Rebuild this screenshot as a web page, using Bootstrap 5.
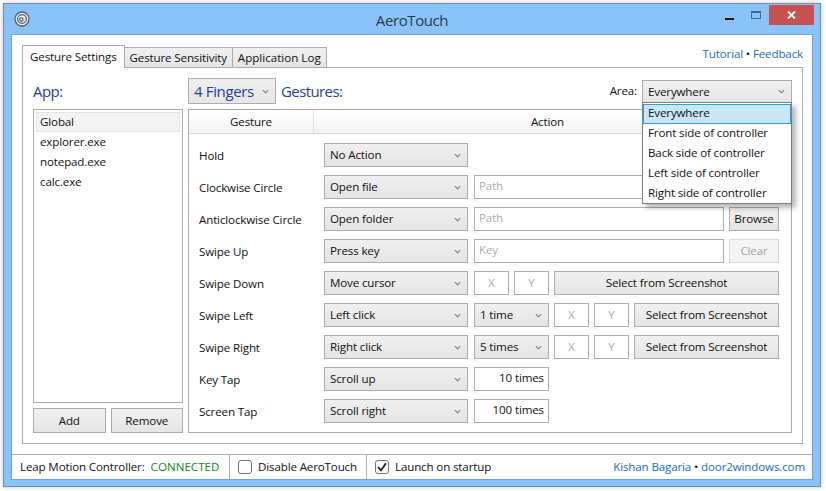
<!DOCTYPE html>
<html lang="en">

<head>
  <meta charset="UTF-8" />
  <title>AeroTouch</title>
  <meta name="viewport" content="width=device-width, initial-scale=1.0">

  <link href="https://cdn.jsdelivr.net/npm/bootstrap@5.3.3/dist/css/bootstrap.min.css" rel="stylesheet">

  <style>
    html, body {
      height: 100%;
      overflow: hidden;
    }

    body {
      background-color: #fff;
      font-family: "Open Sans", "Liberation Sans", sans-serif;
      font-size: 11.6px;
      letter-spacing: -.15px;
      line-height: 16px;
      color: #111;
    }

    .aero-window {
      width: 818px;
      height: 484px;
      margin: 3px 0 0 3px;
      border: 1px solid #6d8fae;
      background-color: #8ac3f9;
      box-shadow: 0 0 5px rgba(0, 0, 0, .22);
      padding: 0 7px 7px;
    }

    .title-bar {
      height: 30px;
      position: relative;
    }

    .title-text {
      font-size: 15px;
      letter-spacing: -.4px;
      color: #2b3a48;
      line-height: 32px;
    }

    .app-icon {
      position: absolute;
      left: 3px;
      top: 7px;
    }

    .win-btns {
      position: absolute;
      right: -1px;
      top: 1px;
    }

    .win-btn {
      height: 20px;
    }

    .win-min { width: 28px; }
    .win-max { width: 26px; }
    .win-close { width: 45px; background-color: #c75050; }

    .client-pane {
      height: 446px;
      border: 1px solid #6ea3d4;
      background-color: #fff;
    }

    .tab-area {
      padding: 10px 9px 10px 10px;
    }

    .nav-tabs.aero-tabs {
      height: 22px;
      border-bottom: 0;
      align-items: flex-end;
      flex-wrap: nowrap;
    }

    .aero-tabs .nav-link {
      height: 20px;
      padding: 2px 5px 0;
      margin: 0 0 0 -1px;
      border: 1px solid #acacac;
      border-bottom: 0;
      border-radius: 0;
      background: linear-gradient(#f0f0f0, #e5e5e5);
      color: #111;
      white-space: nowrap;
    }

    .aero-tabs .nav-item:first-child .nav-link {
      margin-left: 0;
    }

    .aero-tabs .nav-link.active {
      height: 23px;
      padding: 3px 7px 0;
      background: #fff;
      color: #111;
      border-color: #acacac;
      position: relative;
      z-index: 2;
      margin-bottom: -1px;
    }

    .aero-tabs .nav-link.log-tab {
      letter-spacing: 0;
    }

    .top-links {
      align-self: flex-start;
      line-height: 18px;
    }

    .blue-link {
      color: #2468c8;
      text-decoration: none;
    }

    .tab-panel {
      height: 377px;
      border: 1px solid #acacac;
      padding: 10px 10px 10px 10px;
    }

    .app-col {
      width: 150px;
      margin-right: 5px;
    }

    .head-text {
      font-size: 15px;
      letter-spacing: -.6px;
      color: #1f3ea0;
      line-height: 26px;
    }

    .app-list {
      height: 294px;
      margin-top: 5px;
      border: 1px solid #acacac;
      border-radius: 0;
      padding: 2px;
      --bs-list-group-border-width: 0;
    }

    .app-list .list-group-item {
      padding: 2px 4px;
      height: 20px;
      background: transparent;
      color: #111;
      font-size: 11.6px;
      line-height: 16px;
    }

    .app-list .list-group-item.picked {
      background-color: #f3f3f3;
      box-shadow: inset 0 0 0 1px #e3e3e3;
    }

    .flat-btn {
      height: 24px;
      padding: 0 4px;
      border: 1px solid #acacac;
      border-radius: 0;
      background: linear-gradient(#f0f0f0, #e5e5e5);
      color: #111;
      font-size: 11.6px;
      letter-spacing: -.15px;
      line-height: 20px;
      white-space: nowrap;
    }

    .flat-btn:disabled {
      background: #f4f4f4;
      border-color: #d9d9d9;
      color: #a2a2a2;
      opacity: 1;
    }

    .foot-btns {
      margin-top: 5px;
      gap: 5px;
    }

    .foot-btns .flat-btn {
      height: 25px;
      flex: 1 1 0;
    }

    .flat-select {
      height: 24px;
      padding: 0 18px 0 5px;
      border: 1px solid #acacac;
      border-radius: 0;
      color: #111;
      font-size: 11.6px;
      letter-spacing: -.15px;
      line-height: 20px;
      background-color: #ebebeb;
      background-image: url("data:image/svg+xml,%3csvg xmlns='http://www.w3.org/2000/svg' viewBox='0 0 8 5'%3e%3cpath fill='none' stroke='%23777' stroke-width='1.2' d='M1 1l3 3 3-3'/%3e%3c/svg%3e"), linear-gradient(#f0f0f0, #e5e5e5);
      background-repeat: no-repeat;
      background-position: right 6px center, 0 0;
      background-size: 7px 5px, 100% 100%;
    }

    .fingers-select {
      width: 88px;
      height: 26px;
      padding-left: 5px;
      font-size: 15px;
      letter-spacing: -.35px;
      color: #1f3ea0;
      margin-right: 5px;
    }

    .area-label {
      margin-right: 5px;
      padding-top: 5px;
    }

    .area-box {
      position: relative;
      width: 150px;
      margin-top: 2px;
    }

    .area-box .flat-select {
      height: 23px;
    }

    .area-menu {
      display: block;
      position: absolute;
      top: 22px;
      left: 0;
      width: 150px;
      min-width: 0;
      height: 102px;
      padding: 1px 0;
      margin: 0;
      border: 1px solid #7f7f7f;
      border-radius: 0;
      box-shadow: 4px 4px 5px rgba(0, 0, 0, .28);
      background-color: #fff;
      z-index: 5;
    }

    .area-menu .dropdown-item {
      height: 20px;
      padding: 1px 5px;
      color: #111;
      font-size: 11.6px;
      line-height: 16px;
    }

    .area-menu .dropdown-item.active {
      background-color: #c9e5f6;
      box-shadow: inset 0 0 0 1px #26a0da;
      color: #111;
    }

    .gesture-box {
      height: 324px;
      margin-top: 5px;
      border: 1px solid #acacac;
    }

    .grid-head {
      height: 24px;
      background: linear-gradient(#fff, #f3f3f3);
      border-bottom: 1px solid #d5d5d5;
      line-height: 23px;
      padding-right: 10px;
    }

    .head-gesture {
      width: 125px;
      border-right: 1px solid #e3e3e3;
    }

    .grid-rows {
      padding: 9px 12px 0 10px;
    }

    .rule-row {
      height: 24px;
      margin-bottom: 8px;
      gap: 5px;
    }

    .rule-name {
      width: 120px;
      flex: none;
      padding-top: 2px;
    }

    .rule-action {
      width: 144px;
      flex: none;
      margin-right: 1px;
    }

    .rule-times {
      width: 75px;
      flex: none;
    }

    .flat-input {
      height: 24px;
      padding: 0 4px 3px;
      border: 1px solid #acacac;
      border-radius: 0;
      font-size: 11.6px;
      letter-spacing: -.15px;
      line-height: 20px;
      color: #111;
    }

    .flat-input::placeholder {
      color: #ababab;
      opacity: 1;
    }

    .coord-input {
      width: 35px;
      flex: none;
      padding-bottom: 2px;
      text-align: center;
    }

    .count-input {
      width: 75px;
      flex: none;
      text-align: right;
    }

    .side-btn {
      width: 50px;
      flex: none;
    }

    .status-row {
      height: 25px;
      border-top: 1px solid #acacac;
      line-height: 24px;
    }

    .status-cell {
      height: 24px;
      padding: 0 8px 0 8px;
      border-right: 1px solid #acacac;
      white-space: nowrap;
    }

    .status-first {
      width: 218px;
    }

    .status-green {
      color: #0c8a14;
      letter-spacing: 0;
      margin-left: 6px;
    }

    .status-second {
      width: 137px;
    }

    .status-credit {
      padding-right: 7px;
    }

    .aero-check {
      width: 14px;
      height: 14px;
      margin: 0 6px 0 0;
      border: 1px solid #707070;
      border-radius: 0;
      flex: none;
    }

    .aero-check:checked {
      background-color: #fff;
      border-color: #707070;
      background-size: 12px 12px;
      background-image: url("data:image/svg+xml,%3csvg xmlns='http://www.w3.org/2000/svg' viewBox='0 0 12 12'%3e%3cpath fill='none' stroke='%23222' stroke-width='1.8' d='M2 6l3 3.4L10 2.2'/%3e%3c/svg%3e");
    }
  </style>
</head>

<body>
  <div class="aero-window">
    <div class="title-bar text-center">
      <svg class="app-icon" width="16" height="16" viewBox="0 0 16 16">
        <circle cx="8" cy="8" r="7" fill="#e6edf4" stroke="#55606a" stroke-width="1.3" />
        <circle cx="8" cy="8" r="4.4" fill="none" stroke="#55606a" stroke-width="1.3" />
        <circle cx="7.4" cy="8.6" r="1.7" fill="#fff" stroke="#55606a" stroke-width="1.2" />
      </svg>
      <span class="title-text">AeroTouch</span>
      <div class="win-btns d-flex">
        <div class="win-btn win-min d-flex align-items-center justify-content-center">
          <svg width="9" height="12" viewBox="0 0 9 12"><rect y="9" width="9" height="2" fill="#111" /></svg>
        </div>
        <div class="win-btn win-max d-flex align-items-center justify-content-center">
          <svg width="10" height="8" viewBox="0 0 10 8"><rect x=".5" y=".5" width="9" height="7" fill="none" stroke="#4a6a88" /><rect x="1" y="1" width="8" height="1" fill="#4a6a88" /></svg>
        </div>
        <div class="win-btn win-close d-flex align-items-center justify-content-center">
          <svg width="9" height="8" viewBox="0 0 9 8"><path d="M1 .5l7 7M8 .5l-7 7" stroke="#fff" stroke-width="1.8" fill="none" /></svg>
        </div>
      </div>
    </div>

    <div class="client-pane">
      <div class="tab-area">
        <ul class="nav nav-tabs aero-tabs">
          <li class="nav-item"><a class="nav-link active" href="#">Gesture Settings</a></li>
          <li class="nav-item"><a class="nav-link" href="#">Gesture Sensitivity</a></li>
          <li class="nav-item"><a class="nav-link log-tab" href="#">Application Log</a></li>
          <li class="top-links ms-auto"><a class="blue-link" href="#">Tutorial</a> • <a class="blue-link" href="#">Feedback</a></li>
        </ul>

        <div class="tab-panel d-flex">
          <div class="app-col">
            <div class="head-text">App:</div>
            <div class="list-group app-list">
              <div class="list-group-item picked">Global</div>
              <div class="list-group-item">explorer.exe</div>
              <div class="list-group-item">notepad.exe</div>
              <div class="list-group-item">calc.exe</div>
            </div>
            <div class="foot-btns d-flex">
              <button class="btn flat-btn">Add</button>
              <button class="btn flat-btn">Remove</button>
            </div>
          </div>

          <div class="flex-grow-1">
            <div class="d-flex">
              <select class="form-select flat-select fingers-select"><option>4 Fingers</option></select>
              <div class="head-text">Gestures:</div>
              <div class="ms-auto area-label">Area:</div>
              <div class="area-box">
                <select class="form-select flat-select"><option>Everywhere</option></select>
                <div class="dropdown-menu area-menu">
                  <a class="dropdown-item active" href="#">Everywhere</a>
                  <a class="dropdown-item" href="#">Front side of controller</a>
                  <a class="dropdown-item" href="#">Back side of controller</a>
                  <a class="dropdown-item" href="#">Left side of controller</a>
                  <a class="dropdown-item" href="#">Right side of controller</a>
                </div>
              </div>
            </div>

            <div class="gesture-box">
              <div class="grid-head d-flex text-center">
                <div class="head-gesture">Gesture</div>
                <div class="flex-grow-1">Action</div>
              </div>
              <div class="grid-rows">
                <div class="rule-row d-flex align-items-center">
                  <div class="rule-name">Hold</div>
                  <select class="form-select flat-select rule-action"><option>No Action</option></select>
                </div>
                <div class="rule-row d-flex align-items-center">
                  <div class="rule-name">Clockwise Circle</div>
                  <select class="form-select flat-select rule-action"><option>Open file</option></select>
                  <input class="form-control flat-input flex-grow-1" placeholder="Path">
                  <button class="btn flat-btn side-btn">Browse</button>
                </div>
                <div class="rule-row d-flex align-items-center">
                  <div class="rule-name">Anticlockwise Circle</div>
                  <select class="form-select flat-select rule-action"><option>Open folder</option></select>
                  <input class="form-control flat-input flex-grow-1" placeholder="Path">
                  <button class="btn flat-btn side-btn">Browse</button>
                </div>
                <div class="rule-row d-flex align-items-center">
                  <div class="rule-name">Swipe Up</div>
                  <select class="form-select flat-select rule-action"><option>Press key</option></select>
                  <input class="form-control flat-input flex-grow-1" placeholder="Key">
                  <button class="btn flat-btn side-btn" disabled>Clear</button>
                </div>
                <div class="rule-row d-flex align-items-center">
                  <div class="rule-name">Swipe Down</div>
                  <select class="form-select flat-select rule-action"><option>Move cursor</option></select>
                  <input class="form-control flat-input coord-input" placeholder="X">
                  <input class="form-control flat-input coord-input" placeholder="Y">
                  <button class="btn flat-btn flex-grow-1">Select from Screenshot</button>
                </div>
                <div class="rule-row d-flex align-items-center">
                  <div class="rule-name">Swipe Left</div>
                  <select class="form-select flat-select rule-action"><option>Left click</option></select>
                  <select class="form-select flat-select rule-times"><option>1 time</option></select>
                  <input class="form-control flat-input coord-input" placeholder="X">
                  <input class="form-control flat-input coord-input" placeholder="Y">
                  <button class="btn flat-btn flex-grow-1">Select from Screenshot</button>
                </div>
                <div class="rule-row d-flex align-items-center">
                  <div class="rule-name">Swipe Right</div>
                  <select class="form-select flat-select rule-action"><option>Right click</option></select>
                  <select class="form-select flat-select rule-times"><option>5 times</option></select>
                  <input class="form-control flat-input coord-input" placeholder="X">
                  <input class="form-control flat-input coord-input" placeholder="Y">
                  <button class="btn flat-btn flex-grow-1">Select from Screenshot</button>
                </div>
                <div class="rule-row d-flex align-items-center">
                  <div class="rule-name">Key Tap</div>
                  <select class="form-select flat-select rule-action"><option>Scroll up</option></select>
                  <input class="form-control flat-input count-input" value="10 times">
                </div>
                <div class="rule-row d-flex align-items-center">
                  <div class="rule-name">Screen Tap</div>
                  <select class="form-select flat-select rule-action"><option>Scroll right</option></select>
                  <input class="form-control flat-input count-input" value="100 times">
                </div>
              </div>
            </div>
          </div>
        </div>
      </div>

      <div class="status-row d-flex">
        <div class="status-cell status-first">Leap Motion Controller:<span class="status-green">CONNECTED</span></div>
        <div class="status-cell status-second d-flex align-items-center ps-2">
          <input class="form-check-input aero-check" type="checkbox"><span>Disable AeroTouch</span>
        </div>
        <div class="d-flex align-items-center ps-2">
          <input class="form-check-input aero-check" type="checkbox" checked><span>Launch on startup</span>
        </div>
        <div class="ms-auto status-credit"><a class="blue-link" href="#">Kishan Bagaria</a> • <a class="blue-link" href="#">door2windows.com</a></div>
      </div>
    </div>
  </div>

  <script src="https://cdn.jsdelivr.net/npm/bootstrap@5.3.3/dist/js/bootstrap.bundle.min.js"></script>
</body>

</html>
